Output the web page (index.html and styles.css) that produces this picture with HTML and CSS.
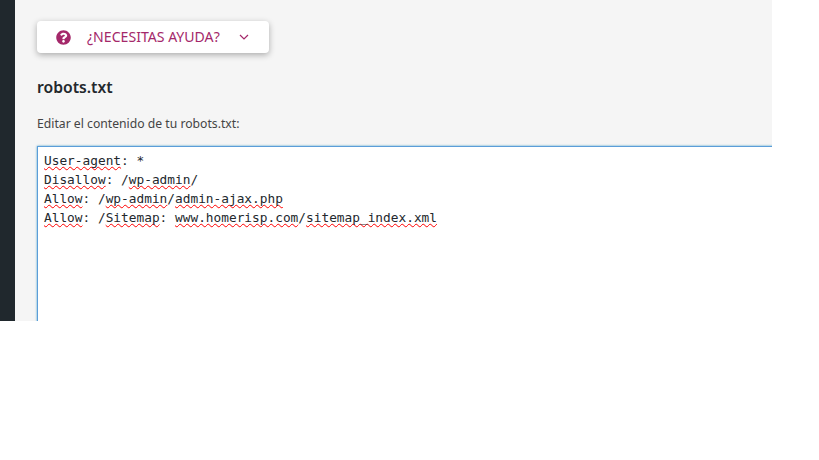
FILE: index.html
```html
<!DOCTYPE html>
<html lang="es">
<head>
<meta charset="utf-8">
<title>robots.txt</title>
<link rel="stylesheet" href="styles.css">
</head>
<body>
<div class="frame">
  <aside class="sidebar"></aside>
  <main class="content">
    <button class="help" type="button">
      <svg class="help-icon" viewBox="0 0 512 512" width="15" height="15" aria-hidden="true"><path fill="#a4286a" d="M504 256c0 137-111 248-248 248S8 393 8 256 119 8 256 8s248 111 248 248zM263 90c-54 0-89 23-116 64-4 5-3 12 3 16l35 26c5 4 13 3 17-2 18-22 30-35 57-35 20 0 45 13 45 32 0 15-12 22-32 33-23 13-54 30-54 71v6c0 7 5 12 12 12h56c7 0 12-5 12-12v-2c0-29 84-30 84-108 0-58-60-101-119-101zm-7 251c-26 0-46 21-46 46s20 46 46 46 46-21 46-46-20-46-46-46z"/></svg>
      <span class="help-label">¿NECESITAS AYUDA?</span>
      <svg class="help-chevron" viewBox="0 0 10 6" width="10" height="6" aria-hidden="true"><path d="M1 1l4 4 4-4" fill="none" stroke="#a4286a" stroke-width="1.2"/></svg>
    </button>
    <h1 class="title">robots.txt</h1>
    <p class="intro">Editar el contenido de tu robots.txt:</p>
    <div class="editor"><div class="line"><span class="sp">User-agent</span>: *</div><div class="line"><span class="sp">Disallow</span>: /<span class="sp">wp-admin</span>/</div><div class="line"><span class="sp">Allow</span>: /<span class="sp">wp-admin</span>/<span class="sp">admin-ajax.php</span></div><div class="line"><span class="sp">Allow</span>: /<span class="sp">Sitemap</span>: <span class="sp">www.homerisp.com</span>/<span class="sp">sitemap_index.xml</span></div></div>
  </main>
</div>
</body>
</html>
```
FILE: styles.css
```css
* { box-sizing: border-box; }
html, body { margin: 0; padding: 0; background: #fff; }
.frame {
  display: flex;
  width: 772px;
  height: 321px;
  overflow: hidden;
}
.sidebar { flex: 0 0 15px; background: #20282d; }
.content {
  flex: 1;
  min-width: 0;
  background: #f5f5f5;
  padding: 21px 0 0 22px;
  font-family: "Noto Sans", "Open Sans", sans-serif;
  color: #444;
}
.help {
  display: flex;
  align-items: center;
  width: 232px;
  height: 32px;
  padding: 0 0 0 19px;
  border: 0;
  border-radius: 4px;
  background: #fff;
  box-shadow: 0 2px 6px rgba(0, 0, 0, .3);
  font: inherit;
  font-size: 14.1px;
  color: #a4286a;
}
.help-label { margin-left: 16px; padding-bottom: 2px; white-space: nowrap; }
.help-chevron { margin-left: 19px; }
.title {
  margin: 22px 0 0;
  font-size: 15.7px;
  line-height: 24px;
  font-weight: 600;
  color: #23282d;
}
.intro {
  margin: 16px 0 0;
  font-size: 12.2px;
  line-height: 18px;
}
.editor {
  margin-top: 13px;
  width: 760px;
  height: 240px;
  padding: 4px 6px;
  border: 1px solid #5b9dd9;
  background: #fff;
  box-shadow: 0 0 2px rgba(30, 140, 190, .8);
  font-family: "DejaVu Sans Mono", "Liberation Mono", monospace;
  font-size: 12.8px;
  line-height: 19px;
  color: #23282d;
  white-space: pre;
}
.line { height: 19px; }
.sp {
  text-decoration: underline wavy #f00;
  text-decoration-thickness: 1px;
  text-decoration-skip-ink: none;
  text-underline-offset: 1px;
}
```
